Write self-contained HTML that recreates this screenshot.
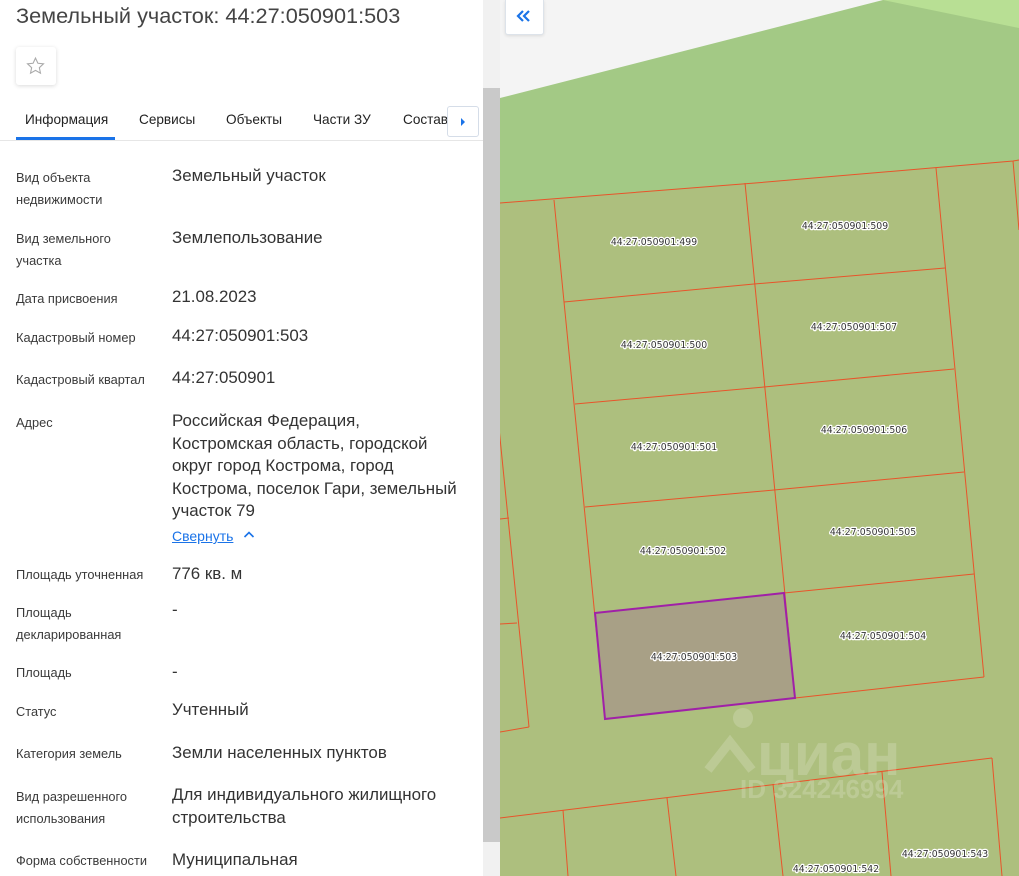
<!DOCTYPE html>
<html><head><meta charset="utf-8"><style>
*{margin:0;padding:0;box-sizing:border-box}
body{width:1019px;height:876px;overflow:hidden;position:relative;background:#fff;font-family:"Liberation Sans","DejaVu Sans",sans-serif;color:#333}
.a{position:absolute;white-space:nowrap}
.l{font-size:12.8px;line-height:22px;color:#3a3a3a}
.v{font-size:16.9px;line-height:22.5px;color:#333}
.tab{position:absolute;top:110px;font-size:13.6px;line-height:20px;color:#222}
</style></head><body>
<div class="a" style="left:16px;top:3px;font-size:21.7px;line-height:25px;color:#444">Земельный участок: 44:27:050901:503</div>
<div class="a" style="left:16px;top:47px;width:40px;height:38px;background:#fff;border-radius:3px;box-shadow:0 1px 4px rgba(0,0,0,.15)"></div>
<svg class="a" style="left:25px;top:56px" width="21" height="20" viewBox="0 0 24 24"><path d="M12 2.5l2.9 6.2 6.7.7-5 4.6 1.4 6.7L12 17.3 6 20.7l1.4-6.7-5-4.6 6.7-.7z" fill="none" stroke="#aaa" stroke-width="1.3"/></svg>
<div class="tab" style="left:25px">Информация</div>
<div class="tab" style="left:139px">Сервисы</div>
<div class="tab" style="left:226px">Объекты</div>
<div class="tab" style="left:313px">Части ЗУ</div>
<div class="tab" style="left:403px">Состав</div>
<div class="a" style="left:16px;top:137px;width:99px;height:3px;background:#1a73e8"></div>
<div class="a" style="left:0;top:140px;width:483px;height:1px;background:#e6e6e6"></div>
<div class="a" style="left:447px;top:106px;width:32px;height:31px;background:#fff;border:1px solid #d5dde8;border-radius:3px"></div>
<div class="a" style="left:461px;top:118px;width:0;height:0;border-left:4px solid #1a73e8;border-top:4px solid transparent;border-bottom:4px solid transparent"></div>
<div class="a" style="left:483px;top:0;width:17px;height:876px;background:#f1f1f1"></div>
<div class="a" style="left:483px;top:88px;width:17px;height:754px;background:#c9c9c9"></div>

<div class="a l" style="left:16px;top:167px">Вид объекта<br>недвижимости</div>
<div class="a v" style="left:172px;top:165px">Земельный участок</div>
<div class="a l" style="left:16px;top:228px">Вид земельного<br>участка</div>
<div class="a v" style="left:172px;top:227px">Землепользование</div>
<div class="a l" style="left:16px;top:288px">Дата присвоения</div>
<div class="a v" style="left:172px;top:286px">21.08.2023</div>
<div class="a l" style="left:16px;top:327px">Кадастровый номер</div>
<div class="a v" style="left:172px;top:325px">44:27:050901:503</div>
<div class="a l" style="left:16px;top:369px">Кадастровый квартал</div>
<div class="a v" style="left:172px;top:367px">44:27:050901</div>
<div class="a l" style="left:16px;top:412px">Адрес</div>
<div class="a v" style="left:172px;top:410px">Российская Федерация,<br>Костромская область, городской<br>округ город Кострома, город<br>Кострома, поселок Гари, земельный<br>участок 79</div>
<div class="a" style="left:172px;top:526px;font-size:14px;line-height:20px;color:#1a73e8;text-decoration:underline">Свернуть</div>
<svg class="a" style="left:243px;top:530px" width="12" height="9" viewBox="0 0 12 9"><path d="M1.5 7L6 2.5 10.5 7" fill="none" stroke="#1a73e8" stroke-width="1.6"/></svg>
<div class="a l" style="left:16px;top:564px">Площадь уточненная</div>
<div class="a v" style="left:172px;top:563px">776 кв. м</div>
<div class="a l" style="left:16px;top:602px">Площадь<br>декларированная</div>
<div class="a v" style="left:172px;top:599px">-</div>
<div class="a l" style="left:16px;top:662px">Площадь</div>
<div class="a v" style="left:172px;top:661px">-</div>
<div class="a l" style="left:16px;top:701px">Статус</div>
<div class="a v" style="left:172px;top:699px">Учтенный</div>
<div class="a l" style="left:16px;top:743px">Категория земель</div>
<div class="a v" style="left:172px;top:742px">Земли населенных пунктов</div>
<div class="a l" style="left:16px;top:786px">Вид разрешенного<br>использования</div>
<div class="a v" style="left:172px;top:784px">Для индивидуального жилищного<br>строительства</div>
<div class="a l" style="left:16px;top:850px">Форма собственности</div>
<div class="a v" style="left:172px;top:849px">Муниципальная</div>

<svg class="a" style="left:500px;top:0" width="519" height="876" viewBox="500 0 519 876">
<rect x="500" y="0" width="519" height="876" fill="#a3c985"/>
<polygon points="500,0 883,0 500,98" fill="#f4f4f4"/>
<polygon points="883,0 1019,0 1019,28" fill="#b8df94"/>
<polygon points="500,203 755,183 1013,161 1019,160 1019,876 500,876" fill="#adbf7e"/>
<g fill="none" stroke="#e8542a" stroke-width="1">
<polyline points="500,203 755,183 1013,161 1019,160"/>
<line x1="554" y1="200" x2="605" y2="719"/>
<line x1="745" y1="183" x2="795" y2="698"/>
<line x1="936" y1="168" x2="984" y2="677"/>
<line x1="1013" y1="161" x2="1019" y2="230"/>
<polyline points="564,302 754,284 945,268"/>
<polyline points="575,404 764,387 954,369"/>
<polyline points="585,507 774,490 964,472"/>
<polyline points="595,613 784,593 974,574"/>
<polyline points="605,719 795,698 984,677"/>
<line x1="498" y1="418" x2="529" y2="727"/>
<line x1="500" y1="519" x2="509" y2="518"/>
<line x1="500" y1="624" x2="517" y2="623"/>
<line x1="500" y1="732" x2="529" y2="727"/>
<line x1="500" y1="818" x2="992" y2="758"/>
<line x1="563" y1="810" x2="568" y2="876"/>
<line x1="667" y1="798" x2="676" y2="876"/>
<line x1="773" y1="784" x2="783" y2="876"/>
<line x1="882" y1="772" x2="891" y2="876"/>
<line x1="992" y1="758" x2="1002" y2="876"/>
</g>
<polygon points="595,613 784,593 795,698 605,719" fill="#a8a086" stroke="#a020a8" stroke-width="2"/>
<g font-family="DejaVu Sans, sans-serif" font-size="9.3" text-anchor="middle" fill="#333" stroke="#fff" stroke-width="2.5" paint-order="stroke" stroke-linejoin="round">
<text x="654" y="245">44:27:050901:499</text>
<text x="845" y="229">44:27:050901:509</text>
<text x="664" y="348">44:27:050901:500</text>
<text x="854" y="330">44:27:050901:507</text>
<text x="674" y="450">44:27:050901:501</text>
<text x="864" y="433">44:27:050901:506</text>
<text x="683" y="554">44:27:050901:502</text>
<text x="873" y="535">44:27:050901:505</text>
<text x="694" y="660">44:27:050901:503</text>
<text x="883" y="639">44:27:050901:504</text>
<text x="836" y="872">44:27:050901:542</text>
<text x="945" y="857">44:27:050901:543</text>
</g>
<g fill="#fff" opacity="0.18" font-family="Liberation Sans, sans-serif" font-weight="bold">
<circle cx="743" cy="718" r="10"/>
<path d="M708 770 L730 742 L752 770" fill="none" stroke="#fff" stroke-width="9"/>
<text x="757" y="775" font-size="60">циан</text>
<text x="740" y="798" font-size="26">ID 324246994</text>
</g>
</svg>
<div class="a" style="left:505px;top:0;width:39px;height:35px;background:#fff;border:1px solid #dde3ea;border-top:none;border-radius:0 0 3px 3px;box-shadow:0 1px 3px rgba(0,0,0,.1)"></div>
<svg class="a" style="left:515px;top:8px" width="18" height="16" viewBox="0 0 18 16"><path d="M8 3L3 8l5 5M14 3L9 8l5 5" fill="none" stroke="#1a73e8" stroke-width="2.2"/></svg>
</body></html>
